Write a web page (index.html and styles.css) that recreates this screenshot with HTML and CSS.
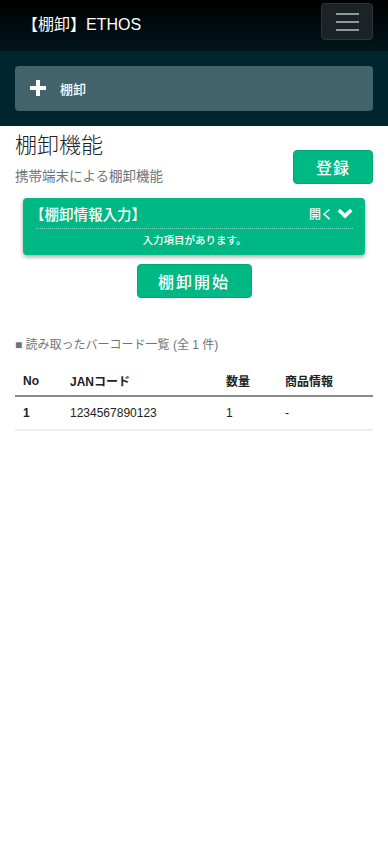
FILE: index.html
```html
<!DOCTYPE html>
<html lang="ja">
<head>
<meta charset="utf-8">
<link rel="stylesheet" href="styles.css">
</head>
<body>
<nav class="navbar">
  <span class="brand">【棚卸】ETHOS</span>
  <button class="toggler" type="button" aria-label="menu">
    <span class="bar"></span><span class="bar"></span><span class="bar"></span>
  </button>
</nav>
<div class="band">
  <div class="menu-btn">
    <svg class="plus" width="16" height="16" viewBox="0 0 16 16"><path d="M6 0h4v6h6v4h-6v6H6v-6H0V6h6z" fill="#fff"/></svg>
    <span class="menu-label">棚卸</span>
  </div>
</div>
<main class="content">
  <div class="head-row">
    <div class="head-text">
      <h1 class="title">棚卸機能</h1>
      <p class="subtitle">携帯端末による棚卸機能</p>
    </div>
    <button class="btn btn-register" type="button">登録</button>
  </div>
  <div class="panel">
    <div class="panel-head">
      <span class="panel-title">【棚卸情報入力】</span>
      <span class="panel-toggle">開く
        <svg class="chev" width="16" height="12" viewBox="0 0 16 12"><path d="M0.5 3.2 3 0.7 8 5.6 13 0.7 15.5 3.2 8 10.6z" fill="#fff"/></svg>
      </span>
    </div>
    <div class="panel-msg">入力項目があります。</div>
  </div>
  <div class="start-wrap">
    <button class="btn btn-start" type="button">棚卸開始</button>
  </div>
  <p class="caption">■ 読み取ったバーコード一覧 (全 1 件)</p>
  <table class="list">
    <thead>
      <tr><th class="c-no">No</th><th class="c-jan">JANコード</th><th class="c-qty">数量</th><th class="c-info">商品情報</th></tr>
    </thead>
    <tbody>
      <tr><td class="num">1</td><td>1234567890123</td><td>1</td><td>-</td></tr>
    </tbody>
  </table>
</main>
</body>
</html>
```
FILE: styles.css
```css
* { box-sizing: border-box; }
html, body { margin: 0; padding: 0; background: #fff; }
body {
  font-family: "Liberation Sans", "Noto Sans CJK JP", sans-serif;
  color: #212529;
}
.navbar {
  height: 51px;
  background: linear-gradient(#000 0%, #00161b 100%);
  display: flex;
  align-items: center;
  justify-content: space-between;
  padding: 0 15px 0 22px;
}
.brand {
  color: #fff;
  font-size: 16px;
  line-height: 20px;
  margin-top: -2px;
}
.toggler {
  width: 52px;
  height: 37px;
  margin-top: -8px;
  background: #1b2326;
  border: 1px solid #2c363a;
  border-radius: 4px;
  display: flex;
  flex-direction: column;
  align-items: center;
  justify-content: center;
  gap: 6px;
  padding: 0;
}
.toggler .bar {
  display: block;
  width: 23px;
  height: 2px;
  background: #8f9799;
}
.band {
  background: #00252e;
  padding: 15px;
}
.menu-btn {
  height: 45px;
  background: #42636a;
  border-radius: 4px;
  display: flex;
  align-items: center;
  padding-left: 15px;
}
.plus { margin-top: -2px; }
.menu-label {
  color: #fff;
  font-size: 13px;
  font-weight: 500;
  margin-left: 14px;
}
.content { padding: 0 15px; }
.head-row {
  display: flex;
  justify-content: space-between;
  align-items: flex-start;
}
.title {
  margin: 7px 0 0;
  font-size: 22px;
  line-height: 26px;
  font-weight: 300;
  color: #222;
}
.subtitle {
  margin: 8px 0 0;
  font-size: 13.5px;
  line-height: 20px;
  color: #6c757d;
}
.btn {
  background: #00b884;
  color: #fff;
  border: 1px solid #00a877;
  border-radius: 4px;
  font-family: inherit;
  font-size: 16px;
  font-weight: 500;
  letter-spacing: 1px;
  padding: 0;
}
.btn-register {
  width: 80px;
  height: 34px;
  margin-top: 24px;
}
.panel {
  margin: 11px 8px 0;
  background: #00b884;
  border-radius: 4px;
  box-shadow: 0 2px 4px rgba(0,0,0,0.35);
  padding: 0 12px 0 13px;
  height: 57px;
  color: #fff;
}
.panel-head {
  display: flex;
  justify-content: space-between;
  align-items: center;
  height: 31px;
  border-bottom: 1px dotted rgba(255,255,255,0.5);
  padding-top: 1px;
}
.panel-title {
  font-size: 14.5px;
  font-weight: 500;
  margin-left: -6px;
}
.panel-toggle {
  font-size: 12px;
  font-weight: 500;
  display: flex;
  align-items: center;
  gap: 4px;
}
.panel-msg {
  text-align: center;
  font-size: 10.5px;
  line-height: 22px;
  font-weight: 500;
}
.start-wrap {
  display: flex;
  justify-content: center;
  margin-top: 9px;
}
.btn-start {
  width: 115px;
  height: 34px;
  letter-spacing: 2px;
}
.caption {
  margin: 38px 0 0;
  font-size: 12px;
  line-height: 18px;
  color: #6c757d;
}
.list {
  width: 100%;
  border-collapse: collapse;
  margin-top: 12px;
  font-size: 12px;
}
.list th {
  text-align: left;
  font-weight: bold;
  height: 30px;
  padding: 0 8px;
  border-bottom: 2px solid #8a8a8a;
  color: #222;
}
.list td {
  height: 34px;
  padding: 0 8px;
  border-bottom: 2px solid #eeeeee;
  color: #222;
}
.list td.num { font-weight: bold; }
.c-no { width: 47px; }
.c-jan { width: 156px; }
.c-qty { width: 59px; }
```
